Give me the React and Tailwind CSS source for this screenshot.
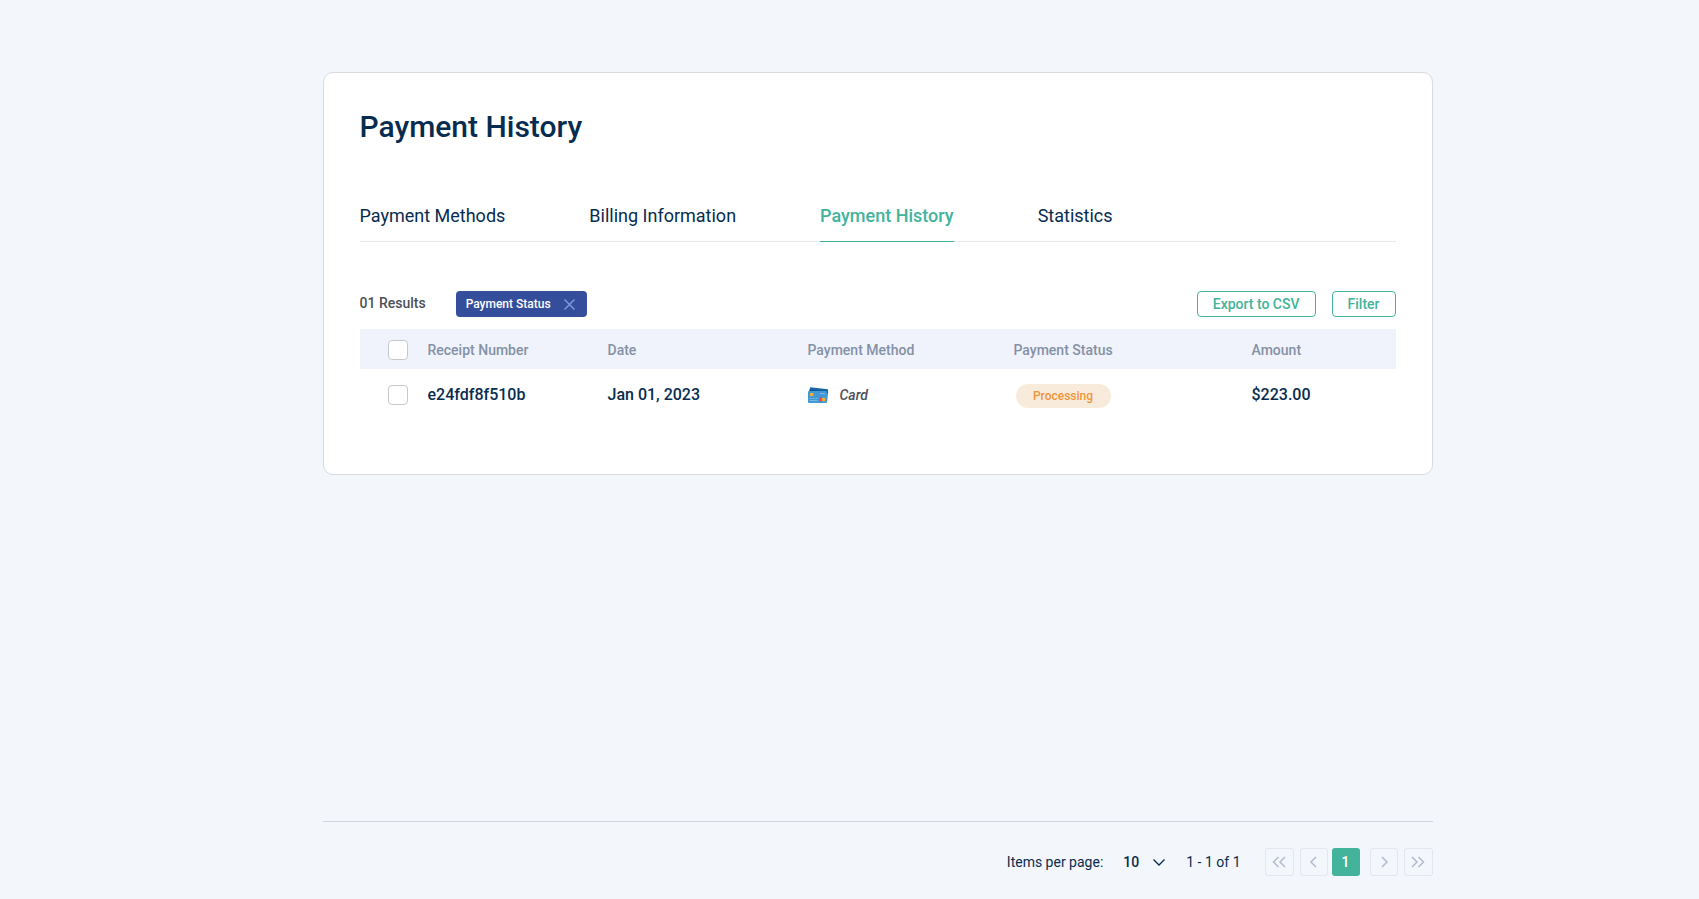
import React from "react";

const tabs = ["Payment Methods", "Billing Information", "Payment History", "Statistics"];

const columns = ["Receipt Number", "Date", "Payment Method", "Payment Status", "Amount"];

const payments = [
  { id: "e24fdf8f510b", date: "Jan 01, 2023", method: "Card", status: "Processing", amount: "$223.00" },
];

function CardIcon() {
  return (
    <svg width="20" height="16" viewBox="0 0 20 16" aria-hidden="true">
      <path d="M2 0.3 20 2.3 19.2 14 1 12z" fill="#1565a8" />
      <path d="M1.5 2.4 20 4.4v1.8L1.4 4z" fill="#0f5390" />
      <rect x="0" y="4" width="19" height="12" rx="1" fill="#4298d5" />
      <rect x="2" y="6" width="3.4" height="3" rx="0.5" fill="#f7b239" />
      <path d="M12 6.6h5" stroke="#86bfe6" strokeWidth="1" />
      <path d="M1.5 11.5h2M4.5 11.5h2M7.5 11.5h2M1.5 13.5h8" stroke="#86bfe6" strokeWidth="0.8" />
      <circle cx="13.2" cy="12.5" r="1.9" fill="#e9483a" />
      <circle cx="15.6" cy="12.5" r="1.9" fill="#f7a93b" />
    </svg>
  );
}

function Checkbox({ label }) {
  return (
    <input
      type="checkbox"
      aria-label={label}
      className="block size-5 appearance-none rounded border border-[#c6c8cc] bg-white checked:bg-[#43b39b]"
    />
  );
}

function PageButton({ label, wide, path }) {
  return (
    <button
      type="button"
      aria-label={label}
      className={`flex h-7 items-center justify-center rounded-[3px] border border-[#e2e6ed] text-[#b4b9cf] ${wide ? "w-[29px]" : "w-7"}`}
    >
      <svg width="14" height="12" viewBox="0 0 14 12" fill="none" stroke="currentColor" strokeWidth="1.5" aria-hidden="true">
        <path d={path} />
      </svg>
    </button>
  );
}

export default function App() {
  return (
    <div className="flex min-h-screen flex-col bg-[#f3f6fb] pl-14 font-[Roboto,sans-serif] text-sm text-[#072c4f]">
      <div className="mx-auto flex w-full max-w-[1110px] grow flex-col pt-[72px]">
        <main className="rounded-[10px] border border-[#d9dbdf] bg-white px-9 pt-9 pb-[53px]">
          <h1 className="text-[30px] leading-9 font-medium">Payment History</h1>

          <nav className="mt-[51px] flex gap-[84px] border-b border-[#e6e8ea] text-lg leading-6">
            {tabs.map((tab) => (
              <a
                key={tab}
                href="#"
                className={
                  tab === "Payment History"
                    ? "-mb-px border-b border-[#43b39b] pt-2 pb-[13px] font-medium text-[#43b39b]"
                    : "pt-2 pb-[13px]"
                }
              >
                {tab}
              </a>
            ))}
          </nav>

          <div className="mt-[49px] flex items-center font-medium">
            <span className="pb-0.5 text-[#4c4f58]">01 Results</span>
            <span className="ml-[30px] flex h-[26px] items-center gap-[13px] rounded bg-[#344e9b] pr-3 pl-2.5 text-xs text-white">
              Payment Status
              <button type="button" aria-label="Remove Payment Status filter" className="text-[#7f97dc]">
                <svg width="11" height="11" viewBox="0 0 11 11" fill="none" stroke="currentColor" strokeWidth="1.5" aria-hidden="true">
                  <path d="M0.5 0.5 10.5 10.5M10.5 0.5 0.5 10.5" />
                </svg>
              </button>
            </span>
            <div className="ml-auto flex gap-4 text-[#43b39b]">
              <button type="button" className="h-[26px] rounded border border-[#43b39b] px-[15px]">Export to CSV</button>
              <button type="button" className="h-[26px] rounded border border-[#43b39b] px-[15px]">Filter</button>
            </div>
          </div>

          <table className="mt-3 w-full table-fixed text-left">
            <colgroup>
              <col className="w-[68px]" />
              <col className="w-[180px]" />
              <col className="w-[200px]" />
              <col className="w-[206px]" />
              <col className="w-[238px]" />
              <col />
            </colgroup>
            <thead>
              <tr className="h-10 bg-[#f0f3fb] text-[#8491a5]">
                <th className="pt-0.5 pl-7"><Checkbox label="Select all payments" /></th>
                {columns.map((column) => (
                  <th key={column} className="pt-0.5 font-medium">{column}</th>
                ))}
              </tr>
            </thead>
            <tbody>
              {payments.map((p) => (
                <tr key={p.id} className="h-[52px] text-base font-medium">
                  <td className="pl-7"><Checkbox label={`Select payment ${p.id}`} /></td>
                  <td>{p.id}</td>
                  <td>{p.date}</td>
                  <td>
                    <span className="flex items-center gap-3 text-sm text-[#4c4f58] italic">
                      <CardIcon />
                      {p.method}
                    </span>
                  </td>
                  <td className="pt-0.5">
                    <span className="ml-0.5 flex h-6 w-[95px] items-center justify-center rounded-full bg-[#f9ebdc] text-xs text-[#f0963a]">
                      {p.status}
                    </span>
                  </td>
                  <td>{p.amount}</td>
                </tr>
              ))}
            </tbody>
          </table>
        </main>

        <footer className="mt-auto flex items-center justify-end border-t border-[#d0d4db] pt-[26px] pb-[23px]">
          <label htmlFor="page-size">Items per page:</label>
          <span className="ml-5 grid items-center">
            <select id="page-size" className="col-start-1 row-start-1 w-[43px] appearance-none bg-transparent font-medium">
              <option>10</option>
              <option>25</option>
              <option>50</option>
            </select>
            <svg className="pointer-events-none col-start-1 row-start-1 justify-self-end" width="14" height="8" viewBox="0 0 14 8" fill="none" stroke="currentColor" strokeWidth="1.3" aria-hidden="true">
              <path d="M1.5 1.5 7 7 12.5 1.5" />
            </svg>
          </span>
          <span className="ml-5">1 - 1 of 1</span>
          <nav aria-label="Pagination" className="ml-6 flex">
            <PageButton label="First page" wide path="M6.5 1 1.5 6 6.5 11M13 1 8 6 13 11" />
            <span className="ml-1.5 flex gap-1">
              <PageButton label="Previous page" path="M9 1 4 6 9 11" />
              <button type="button" aria-current="page" className="size-7 rounded-[3px] bg-[#43b39b] font-medium text-white">1</button>
            </span>
            <span className="ml-2.5 flex gap-1.5">
              <PageButton label="Next page" path="M5 1 10 6 5 11" />
              <PageButton label="Last page" wide path="M1 1 6 6 1 11M7.5 1 12.5 6 7.5 11" />
            </span>
          </nav>
        </footer>
      </div>
    </div>
  );
}
